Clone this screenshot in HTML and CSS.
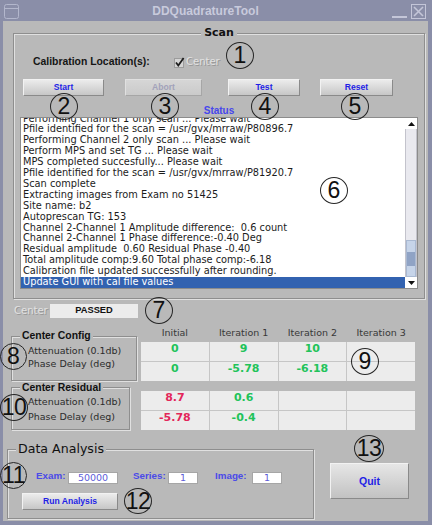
FILE: index.html
```html
<!DOCTYPE html>
<html>
<head>
<meta charset="utf-8">
<title>DDQuadratureTool</title>
<link rel="stylesheet" href="styles.css">
</head>
<body>
<div class="screen">
  <div class="titlebar">
    <span class="tb-icon"><svg width="15" height="15" viewBox="0 0 15 15"><rect x="0.5" y="0.5" width="14" height="14" rx="2" fill="none" stroke="#b3b7cc"/><line x1="1" y1="4.5" x2="14" y2="4.5" stroke="#b3b7cc"/></svg></span>
    <span class="tb-title">DDQuadratureTool</span>
    <span class="tb-min"></span>
    <span class="tb-close"><svg width="15" height="15" viewBox="0 0 15 15"><rect x="0.5" y="0.5" width="14" height="14" fill="none" stroke="#c4c6d8"/><path d="M3 3 L12 12 M12 3 L3 12" stroke="#c4c6d8" stroke-width="1.6"/></svg></span>
  </div>
  <div class="body">
    <fieldset class="group scan">
      <legend class="scan-legend">Scan</legend>
      <div class="cal-row">
        <span class="cal-label">Calibration Location(s):</span>
        <span class="check"><svg width="11" height="11" viewBox="0 0 11 11"><rect x="0.5" y="1.5" width="9" height="9" fill="#d4d4d4" stroke="#9c9c9c"/><path d="M2 5.5 L4.3 8.5 L9.6 1" fill="none" stroke="#1e1e1e" stroke-width="1.8"/></svg></span>
        <span class="disabled">Center</span>
      </div>
      <div class="btn-row">
        <button class="btn btn-start">Start</button>
        <button class="btn btn-abort">Abort</button>
        <button class="btn btn-test">Test</button>
        <button class="btn btn-reset">Reset</button>
      </div>
      <div class="status">Status</div>
      <div class="log">
        <div class="log-lines">
          <div class="line">Performing Channel 1 only scan ... Please wait</div>
          <div class="line">Pfile identified for the scan = /usr/gvx/mrraw/P80896.7</div>
          <div class="line">Performing Channel 2 only scan ... Please wait</div>
          <div class="line">Perform MPS and set TG ... Please wait</div>
          <div class="line">MPS completed succesfully... Please wait</div>
          <div class="line">Pfile identified for the scan = /usr/gvx/mrraw/P81920.7</div>
          <div class="line">Scan complete</div>
          <div class="line">Extracting images from Exam no 51425</div>
          <div class="line">Site name: b2</div>
          <div class="line">Autoprescan TG: 153</div>
          <div class="line">Channel 2-Channel 1 Amplitude difference:  0.6 count</div>
          <div class="line">Channel 2-Channel 1 Phase difference:-0.40 Deg</div>
          <div class="line">Residual amplitude  0.60 Residual Phase -0.40</div>
          <div class="line">Total amplitude comp:9.60 Total phase comp:-6.18</div>
          <div class="line">Calibration file updated successfully after rounding.</div>
          <div class="line sel">Update GUI with cal file values</div>
        </div>
        <div class="scrollbar">
          <div class="sb-btn"><svg width="7" height="4" viewBox="0 0 7 4"><polygon points="0,4 7,4 3.5,0" fill="#111"/></svg></div>
          <div class="sb-track"><div class="sb-thumb"><span class="grip"></span></div></div>
          <div class="sb-btn"><svg width="7" height="4" viewBox="0 0 7 4"><polygon points="0,0 7,0 3.5,4" fill="#111"/></svg></div>
        </div>
      </div>
    </fieldset>

    <div class="result-row">
      <span class="disabled res-label">Center</span>
      <span class="passed">PASSED</span>
    </div>

    <div class="cfg-row">
      <div class="cfg-left">
        <fieldset class="group cfg">
          <legend class="sub-legend">Center Config</legend>
          <div class="row-label first">Attenuation (0.1db)</div>
          <div class="row-label">Phase Delay (deg)</div>
        </fieldset>
        <fieldset class="group res">
          <legend class="sub-legend">Center Residual</legend>
          <div class="row-label tall">Attenuation (0.1db)</div>
          <div class="row-label tall">Phase Delay (deg)</div>
        </fieldset>
      </div>
      <div class="cfg-right">
        <div class="grid4 heads">
          <span class="head">Initial</span>
          <span class="head">Iteration 1</span>
          <span class="head">Iteration 2</span>
          <span class="head">Iteration 3</span>
        </div>
        <div class="grid4 table">
          <span class="cell ok">0</span>
          <span class="cell ok">9</span>
          <span class="cell ok">10</span>
          <span class="cell"></span>
          <span class="cell ok">0</span>
          <span class="cell ok">-5.78</span>
          <span class="cell ok">-6.18</span>
          <span class="cell"></span>
        </div>
        <div class="grid4 table t2">
          <span class="cell bad">8.7</span>
          <span class="cell ok">0.6</span>
          <span class="cell"></span>
          <span class="cell"></span>
          <span class="cell bad">-5.78</span>
          <span class="cell ok">-0.4</span>
          <span class="cell"></span>
          <span class="cell"></span>
        </div>
      </div>
    </div>

    <div class="analysis-row">
      <fieldset class="group da">
        <legend class="da-legend">Data Analysis</legend>
        <div class="fields">
          <span class="f-label l-exam">Exam:</span>
          <span class="field f-exam">50000</span>
          <span class="f-label l-series">Series:</span>
          <span class="field f-small">1</span>
          <span class="f-label l-image">Image:</span>
          <span class="field f-small">1</span>
        </div>
        <button class="btn btn-run">Run Analysis</button>
      </fieldset>
      <button class="btn quit">Quit</button>
    </div>
  </div>

  <span class="mark m1">1</span>
  <span class="mark m2">2</span>
  <span class="mark m3">3</span>
  <span class="mark m4">4</span>
  <span class="mark m5">5</span>
  <span class="mark m6">6</span>
  <span class="mark m7">7</span>
  <span class="mark m8">8</span>
  <span class="mark m9">9</span>
  <span class="mark m10 two">10</span>
  <span class="mark m11 two">11</span>
  <span class="mark m12 two">12</span>
  <span class="mark m13 two">13</span>
</div>
</body>
</html>
```
FILE: styles.css
```css
* { box-sizing: border-box; }
html, body { margin: 0; padding: 0; }
body { width: 432px; height: 525px; overflow: hidden; font-family: "DejaVu Sans", sans-serif; background: #8a8ea8; }

.screen {
  position: relative;
  width: 432px;
  height: 525px;
  background: #8a8ea8;
  display: flex;
  flex-direction: column;
}

/* title bar */
.titlebar { height: 21px; flex-shrink: 0; display: flex; align-items: flex-start; }
.tb-icon { margin: 4px 0 0 4px; width: 15px; height: 15px; display: block; }
.tb-icon svg, .tb-close svg { display: block; }
.tb-title {
  flex: 1;
  text-align: center;
  font: bold 12px/23px "Liberation Sans", Arial, sans-serif;
  color: #c8cadc;
}
.tb-min { width: 15px; height: 2px; margin-top: 16px; background: #c4c6d8; }
.tb-close { width: 15px; height: 15px; margin: 4px 6px 0 4px; display: block; }

/* window body */
.body {
  flex: 1;
  margin: 0 4px 4px 3px;
  background: #b9b9b9;
  display: flex;
  flex-direction: column;
  align-items: flex-start;
}

.group {
  margin: 0;
  padding: 0;
  min-width: 0;
  border: 1px solid #8e8e8e;
  box-shadow: inset 1px 1px 0 #e0e0e0, 1px 1px 0 #e0e0e0;
}

/* scan group */
.scan { margin: 5px 0 0 10px; width: 412px; padding: 0 6px 9px; }
.scan-legend {
  margin: 0 auto;
  padding: 0 3px;
  font: bold 11px/14px "DejaVu Sans", sans-serif;
  color: #111;
  background: #b9b9b9;
}
.cal-row { margin-top: 15px; height: 14px; display: flex; align-items: center; padding-left: 13px; }
.cal-label { width: 141px; font: bold 10.4px/14px "Liberation Sans", Arial, sans-serif; color: #151515; }
.check { width: 11px; height: 11px; display: block; }
.check svg { display: block; }
.disabled {
  font: 10px/14px "DejaVu Sans", sans-serif;
  color: #e2e2e2;
  text-shadow: 1px 1px 0 #979797;
}
.cal-row .disabled { margin-left: 1px; }

.btn-row { margin-top: 10px; height: 17px; display: flex; }
.btn {
  display: block;
  height: 17px;
  padding: 0;
  border: 1px solid;
  border-color: #f2f2f2 #8a8a8a #8a8a8a #f2f2f2;
  background: linear-gradient(#ececec, #c6c6c6);
  font: bold 8.6px/15px "Liberation Sans", Arial, sans-serif;
  color: #1f1fe6;
  text-align: center;
}
.btn-start { margin-left: 3px; width: 81px; }
.btn-abort {
  margin-left: 21px;
  width: 77px;
  background: linear-gradient(#d6d6d6, #cacaca);
  border-color: #e0e0e0 #a6a6a6 #a6a6a6 #e0e0e0;
  color: #a2a2ba;
}
.btn-test { margin-left: 26px; width: 72px; }
.btn-reset { margin-left: 20px; width: 73px; }

.status {
  margin-top: 8px;
  font: bold 10px/13px "Liberation Sans", Arial, sans-serif;
  color: #4646ec;
  text-align: center;
}

.log {
  width: 398px;
  height: 172px;
  border: 1px solid #8c8c8c;
  background: #fff;
  display: flex;
}
.log-lines {
  flex: 1;
  min-width: 0;
  display: flex;
  flex-direction: column;
  justify-content: flex-end;
  overflow: hidden;
}
.line {
  flex-shrink: 0;
  padding-left: 2px;
  font: 9.8px/10.9px "DejaVu Sans", sans-serif;
  color: #1c1c1c;
  white-space: pre;
}
.line.sel { background: #3262b0; color: #fff; }

.scrollbar { width: 12px; display: flex; flex-direction: column; background: #fff; }
.sb-btn { height: 11px; flex-shrink: 0; display: flex; align-items: center; justify-content: center; }
.sb-btn svg { display: block; }
.sb-track {
  flex: 1;
  background: #e9e9ef;
  border-left: 1px solid #c3c3cc;
  border-right: 1px solid #c3c3cc;
  display: flex;
  flex-direction: column;
  justify-content: flex-end;
}
.sb-thumb {
  height: 37px;
  background: #c6d4e9;
  border: 1px solid #a9b9d2;
  display: flex;
  align-items: center;
  justify-content: center;
}
.grip {
  width: 8px;
  height: 14px;
  background-image: radial-gradient(circle, #8ea2c4 0.7px, transparent 0.9px);
  background-size: 2px 2px;
}

/* result row */
.result-row { margin: 5px 0 0 11px; height: 14px; display: flex; }
.res-label { width: 36px; }
.passed {
  width: 88px;
  height: 14px;
  background: #ececec;
  font: bold 9.3px/12px "Liberation Sans", Arial, sans-serif;
  color: #111;
  text-align: center;
}

/* config / residual */
.cfg-row { margin-top: 7px; display: flex; }
.cfg-left { margin-left: 8px; width: 126px; }
.cfg-right { margin-left: 4px; width: 274px; }

.cfg { margin-top: 5px; width: 126px; padding-bottom: 9px; }
.res { margin-top: 1px; width: 119px; padding-bottom: 5px; }
.sub-legend {
  margin-left: 8px;
  padding: 0 2px;
  font: bold 10.4px/12px "Liberation Sans", Arial, sans-serif;
  color: #111;
  background: #b9b9b9;
}
.row-label {
  padding-left: 16px;
  font: 9.5px/13.5px "DejaVu Sans", sans-serif;
  color: #2c2c2c;
  white-space: nowrap;
}
.row-label.first { margin-top: 1.5px; }
.row-label.tall { line-height: 15px; }

.grid4 { display: grid; grid-template-columns: repeat(4, 1fr); column-gap: 1px; }
.heads { height: 17px; }
.head { font: 9.5px/16px "DejaVu Sans", sans-serif; color: #383838; text-align: center; white-space: nowrap; }
.table { background: #c6c6c6; row-gap: 1px; grid-auto-rows: 19px; }
.t2 { margin-top: 10px; }
.cell {
  background: #ececec;
  text-align: center;
  font: bold 11px/13px "DejaVu Sans", sans-serif;
}
.ok { color: #22c35a; }
.bad { color: #e3265a; }

/* data analysis */
.analysis-row { margin-top: 11px; display: flex; align-items: flex-start; }
.da { margin-left: 4px; width: 307px; padding-bottom: 8px; }
.da-legend {
  margin-left: 8px;
  padding: 0 2px;
  font: 12.6px/16px "DejaVu Sans", sans-serif;
  color: #111;
  background: #b9b9b9;
}
.fields { margin-top: 13px; height: 14px; display: flex; align-items: flex-start; padding-left: 28px; }
.f-label { font: bold 9.8px/12px "Liberation Sans", Arial, sans-serif; color: #4a4ae8; white-space: nowrap; }
.l-exam { width: 32px; }
.l-series { margin-left: 15px; width: 35px; }
.l-image { margin-left: 17px; width: 37px; }
.field {
  margin-top: 2px;
  height: 12px;
  background: #fff;
  border: 1px solid #a6a6a6;
  font: 9.5px/10px "DejaVu Sans", sans-serif;
  color: #5d5dd8;
  text-align: center;
}
.f-exam { width: 50px; }
.f-small { width: 30px; }
.btn-run { margin: 9px 0 0 14px; width: 96px; height: 17px; }
.quit {
  margin: 22px 0 0 16px;
  width: 79px;
  height: 36px;
  font-size: 10.5px;
  line-height: 34px;
  background: linear-gradient(#e6e6e6, #c2c2c2);
}

/* annotation circles (overlay) */
.mark {
  position: absolute;
  width: 28px;
  height: 27px;
  border: 1px solid #262626;
  border-radius: 50%;
  display: flex;
  align-items: center;
  justify-content: center;
  font: 23px/25px "Liberation Sans", Arial, sans-serif;
  color: #111;
}
.mark.two { letter-spacing: -0.5px; }
.m1 { left: 226px; top: 42px; }
.m2 { left: 50px; top: 93px; }
.m3 { left: 151px; top: 93px; }
.m4 { left: 251px; top: 93px; }
.m5 { left: 341px; top: 93px; }
.m6 { left: 320px; top: 177px; }
.m7 { left: 145px; top: 297px; }
.m8 { left: 0; top: 343px; width: 27px; }
.m9 { left: 351px; top: 348px; }
.m10 { left: 0; top: 394px; }
.m11 { left: 0; top: 462px; width: 27px; }
.m12 { left: 124px; top: 488px; height: 26px; }
.m13 { left: 354px; top: 435px; width: 30px; }
```
